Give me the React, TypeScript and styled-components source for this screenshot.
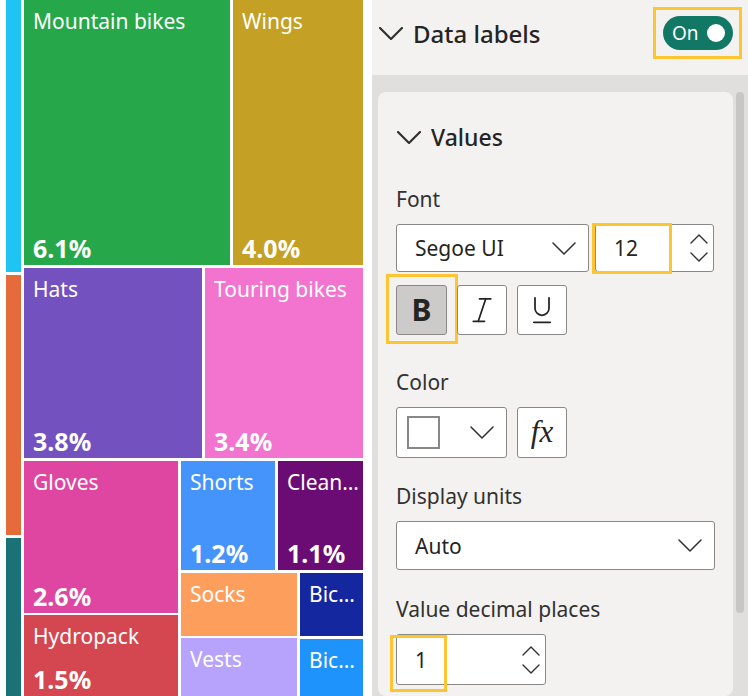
import React from "react";
import styled, { createGlobalStyle } from "styled-components";

const GlobalStyle = createGlobalStyle`
  *, *::before, *::after {
    box-sizing: border-box;
  }
  html, body {
    margin: 0;
    padding: 0;
    background: #ffffff;
  }
  body {
    font-family: "Segoe UI", "Noto Sans", "Open Sans", sans-serif;
    color: #252423;
  }
`;

const Page = styled.div`
  display: flex;
  width: 748px;
  height: 696px;
  overflow: hidden;
  background: #ffffff;
`;

/* ---------- treemap ---------- */

const Treemap = styled.div`
  display: flex;
  gap: 3px;
  width: 363px;
  padding-left: 6px;
  margin-right: 9px;
  flex-shrink: 0;
`;

const Box = styled.div<{ $dir?: "row" | "column"; $gap?: number; $basis?: number }>`
  display: flex;
  flex-direction: ${({ $dir }) => $dir || "row"};
  gap: ${({ $gap }) => $gap ?? 3}px;
  flex: ${({ $basis }) => ($basis ? `0 0 ${$basis}px` : "1 1 0")};
  min-width: 0;
  min-height: 0;
`;

const Strip = styled.div<{ $bg: string; $basis?: number }>`
  background: ${({ $bg }) => $bg};
  flex: ${({ $basis }) => ($basis ? `0 0 ${$basis}px` : "1 1 0")};
`;

const TileBox = styled.div<{ $bg: string; $basis?: number }>`
  display: flex;
  flex-direction: column;
  justify-content: space-between;
  flex: ${({ $basis }) => ($basis ? `0 0 ${$basis}px` : "1 1 0")};
  min-width: 0;
  min-height: 0;
  overflow: hidden;
  padding: 7px 4px 2px 9px;
  background: ${({ $bg }) => $bg};
  color: #ffffff;
`;

const TileName = styled.div`
  font-size: 21px;
  line-height: 28px;
  white-space: nowrap;
  overflow: hidden;
  text-overflow: ellipsis;
`;

const TilePct = styled.div`
  font-size: 25px;
  line-height: 30px;
  font-weight: 700;
  white-space: nowrap;
`;

function Tile({ name, pct, bg, basis }: { name: string; pct?: string; bg: string; basis?: number }) {
  return (
    <TileBox $bg={bg} $basis={basis}>
      <TileName>{name}</TileName>
      {pct && <TilePct>{pct}</TilePct>}
    </TileBox>
  );
}

/* ---------- format panel ---------- */

const Panel = styled.div`
  display: flex;
  flex-direction: column;
  flex: 1;
  background: #e1dfdd;
`;

const Header = styled.div`
  display: flex;
  align-items: center;
  height: 75px;
  padding: 0 6px 9px 7px;
  background: #f3f2f1;
`;

const SectionTitle = styled.div<{ $size: number }>`
  display: flex;
  align-items: center;
  gap: 10px;
  font-size: ${({ $size }) => $size}px;
  font-weight: 500;
  color: #252423;
`;

const Highlight = styled.div`
  border: 3px solid #fdc532;
  padding: 6px 6px 6px 7px;
  margin-left: auto;
`;

const Toggle = styled.div`
  display: flex;
  align-items: center;
  justify-content: space-between;
  width: 70px;
  height: 34px;
  padding: 0 8px 0 9px;
  border-radius: 17px;
  background: #117865;
  color: #ffffff;
  font-size: 19px;
`;

const Knob = styled.span`
  width: 18px;
  height: 18px;
  border-radius: 50%;
  background: #ffffff;
`;

const Band = styled.div`
  display: flex;
  gap: 3px;
  flex: 1;
  padding: 17px 4px 0 6px;
`;

const Card = styled.div`
  display: flex;
  flex-direction: column;
  flex: 1;
  padding: 0 18px;
  border-radius: 8px;
  background: #f3f2f1;
`;

const Scrollbar = styled.div`
  width: 8px;
  height: 521px;
  border-radius: 4px;
  background: #c8c6c4;
`;

const ValuesRow = styled.div`
  height: 30px;
  margin-top: 30px;
  padding-left: 1px;
  display: flex;
  align-items: center;
`;

const Label = styled.div<{ $top: number }>`
  height: 30px;
  line-height: 30px;
  margin-top: ${({ $top }) => $top}px;
  margin-bottom: 10px;
  font-size: 21px;
  color: #323130;
`;

const Row = styled.div<{ $gap: number; $top?: number }>`
  display: flex;
  gap: ${({ $gap }) => $gap}px;
  margin-top: ${({ $top }) => $top ?? 0}px;
`;

const Field = styled.div<{ $w?: number; $h: number }>`
  position: relative;
  display: flex;
  align-items: center;
  width: ${({ $w }) => ($w ? `${$w}px` : "100%")};
  height: ${({ $h }) => $h}px;
  padding: 0 12px 0 18px;
  border: 1px solid #8a8886;
  border-radius: 3px;
  background: #ffffff;
  font-size: 21px;
  color: #252423;
`;

const FieldText = styled.span`
  flex: 1;
`;

const Spinner = styled.div`
  display: flex;
  flex-direction: column;
  gap: 8px;
  margin-right: -7px;
`;

const IconButton = styled.button<{ $active?: boolean; $w: number; $h?: number }>`
  position: relative;
  display: flex;
  align-items: center;
  justify-content: center;
  width: ${({ $w }) => $w}px;
  height: ${({ $h }) => $h ?? 50}px;
  padding: 0;
  border: 1px solid #8a8886;
  border-radius: 3px;
  background: ${({ $active }) => ($active ? "#cdcbc9" : "#ffffff")};
  color: #252423;
  font-family: inherit;
`;

const BoldGlyph = styled.span`
  font-size: 30px;
  line-height: 1;
  font-weight: 700;
`;

const FxGlyph = styled.span`
  font-family: "Liberation Serif", "DejaVu Serif", serif;
  font-style: italic;
  font-size: 31px;
  line-height: 1;
  margin-top: -3px;
`;

const Swatch = styled.span`
  width: 33px;
  height: 33px;
  border: 2px solid #8a8886;
  background: #ffffff;
  margin-left: -8px;
  margin-right: auto;
`;

const Mark = styled.div<{ $l: number; $t: number; $w: number; $h: number }>`
  position: absolute;
  left: ${({ $l }) => $l}px;
  top: ${({ $t }) => $t}px;
  width: ${({ $w }) => $w}px;
  height: ${({ $h }) => $h}px;
  border: 3px solid #fdc532;
  pointer-events: none;
`;

function Chevron({ w, h, stroke, up }: { w: number; h: number; stroke: number; up?: boolean }) {
  const pts = up ? `1,${h - 1} ${w / 2},1 ${w - 1},${h - 1}` : `1,1 ${w / 2},${h - 1} ${w - 1},1`;
  return (
    <svg width={w} height={h} viewBox={`0 0 ${w} ${h}`} fill="none">
      <polyline points={pts} stroke="#323130" strokeWidth={stroke} strokeLinecap="round" strokeLinejoin="round" />
    </svg>
  );
}

function StepArrows() {
  return (
    <Spinner>
      <Chevron w={18} h={10} stroke={1.4} up />
      <Chevron w={18} h={10} stroke={1.4} />
    </Spinner>
  );
}

export default function App() {
  return (
    <Page>
      <GlobalStyle />
      <Treemap>
        <Box $dir="column" $basis={15}>
          <Strip $bg="#1fc5f2" $basis={272} />
          <Strip $bg="#e56b3a" $basis={260} />
          <Strip $bg="#1b7276" />
        </Box>
        <Box $dir="column">
          <Box $basis={265}>
            <Tile name="Mountain bikes" pct="6.1%" bg="#26a84a" basis={206} />
            <Tile name="Wings" pct="4.0%" bg="#c4a124" />
          </Box>
          <Box $basis={190}>
            <Tile name="Hats" pct="3.8%" bg="#7352c0" basis={178} />
            <Tile name="Touring bikes" pct="3.4%" bg="#f274cf" />
          </Box>
          <Box>
            <Box $dir="column" $gap={2} $basis={154}>
              <Tile name="Gloves" pct="2.6%" bg="#de46a2" basis={152} />
              <Tile name="Hydropack" pct="1.5%" bg="#d44750" />
            </Box>
            <Box $dir="column">
              <Box $basis={109}>
                <Tile name="Shorts" pct="1.2%" bg="#4594fc" basis={94} />
                <Tile name="Cleaners" pct="1.1%" bg="#6a0c74" />
              </Box>
              <Box>
                <Box $dir="column" $gap={2} $basis={116}>
                  <Tile name="Socks" bg="#fe9e5c" basis={63} />
                  <Tile name="Vests" bg="#b7a3fb" />
                </Box>
                <Box $dir="column">
                  <Tile name="Bicycle racks" bg="#15279e" basis={63} />
                  <Tile name="Bicycle stands" bg="#1e93fb" />
                </Box>
              </Box>
            </Box>
          </Box>
        </Box>
      </Treemap>

      <Panel>
        <Header>
          <SectionTitle $size={24}>
            <Chevron w={24} h={13} stroke={2.2} />
            Data labels
          </SectionTitle>
          <Highlight>
            <Toggle>
              On
              <Knob />
            </Toggle>
          </Highlight>
        </Header>

        <Band>
          <Card>
            <ValuesRow>
              <SectionTitle $size={23}>
                <Chevron w={24} h={13} stroke={2.2} />
                Values
              </SectionTitle>
            </ValuesRow>

            <Label $top={32}>Font</Label>
            <Row $gap={6}>
              <Field $w={193} $h={48}>
                <FieldText>Segoe UI</FieldText>
                <Chevron w={24} h={13} stroke={1.5} />
              </Field>
              <Field $w={119} $h={48}>
                <FieldText>12</FieldText>
                <StepArrows />
                <Mark $l={-4} $t={-2} $w={80} $h={51} />
              </Field>
            </Row>
            <Row $gap={10} $top={13}>
              <IconButton $active $w={51}>
                <BoldGlyph>B</BoldGlyph>
                <Mark $l={-11} $t={-12} $w={72} $h={70} />
              </IconButton>
              <IconButton $w={50}>
                <svg width="30" height="30" viewBox="0 0 24 24" fill="none" stroke="#252423" strokeWidth="1.4" strokeLinecap="round">
                  <line x1="19" y1="3" x2="10" y2="3" />
                  <line x1="14" y1="21" x2="5" y2="21" />
                  <line x1="15" y1="3" x2="9" y2="21" />
                </svg>
              </IconButton>
              <IconButton $w={50}>
                <svg width="28" height="32" viewBox="0 0 24 27" fill="none" stroke="#252423" strokeWidth="1.5" strokeLinecap="round">
                  <path d="M6 3v9a6 6 0 0 0 12 0V3" />
                  <line x1="5" y1="24" x2="19" y2="24" />
                </svg>
              </IconButton>
            </Row>

            <Label $top={32}>Color</Label>
            <Row $gap={10}>
              <Field $w={111} $h={51}>
                <Swatch />
                <Chevron w={24} h={13} stroke={1.5} />
              </Field>
              <IconButton $w={50} $h={51}>
                <FxGlyph>fx</FxGlyph>
              </IconButton>
            </Row>

            <Label $top={23}>Display units</Label>
            <Field $h={49}>
              <FieldText>Auto</FieldText>
              <Chevron w={24} h={13} stroke={1.5} />
            </Field>

            <Label $top={24}>Value decimal places</Label>
            <Field $w={150} $h={51}>
              <FieldText>1</FieldText>
              <StepArrows />
              <Mark $l={-7} $t={0} $w={57} $h={57} />
            </Field>
          </Card>
          <Scrollbar />
        </Band>
      </Panel>
    </Page>
  );
}
